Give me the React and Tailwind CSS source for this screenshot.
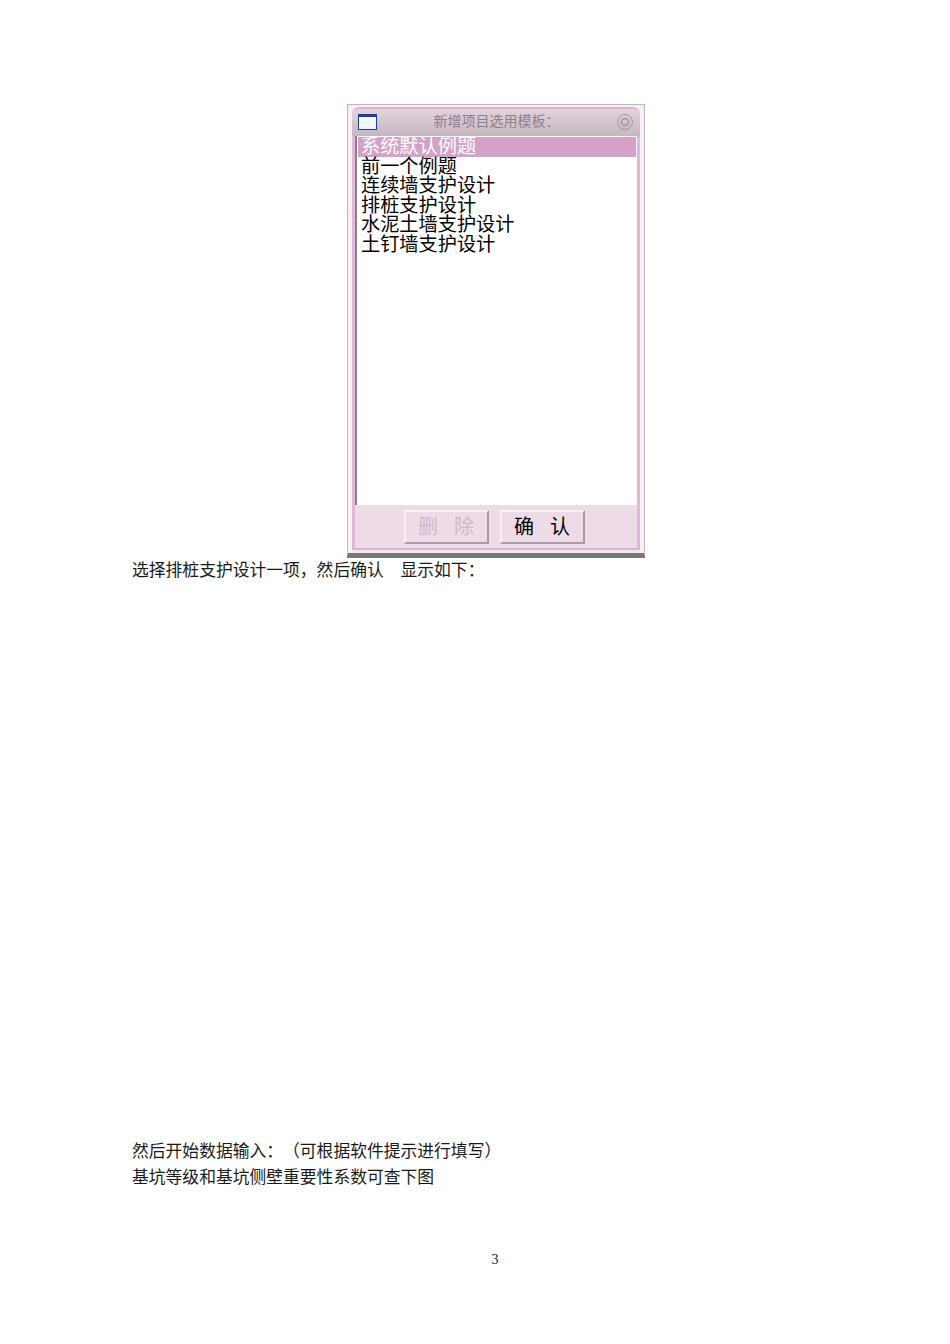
import React from "react";

const templates = [
  "系统默认例题",
  "前一个例题",
  "连续墙支护设计",
  "排桩支护设计",
  "水泥土墙支护设计",
  "土钉墙支护设计",
];

const Button = ({ label, disabled }) => (
  <div
    className={`flex h-[34px] w-[85px] items-center justify-center gap-[16px] border-2 border-t-[#f8f0f6] border-l-[#f8f0f6] border-r-[#a99aa6] border-b-[#a99aa6] text-[20px] leading-none ${
      disabled ? "text-[#cdbac8]" : "text-black"
    }`}
  >
    <span>{label[0]}</span>
    <span>{label[1]}</span>
  </div>
);

const Window = () => (
  <div className="ml-[347px] flex h-[454px] w-[298px] flex-col border border-b-[5px] border-[#b9b9b9] border-b-[#777777] bg-[#f7eff5] px-[4px] pt-[2px]">
    {/* title bar */}
    <div className="flex h-[29px] shrink-0 items-center rounded-t-[7px] border-t-2 border-[#dcb4d2] bg-gradient-to-b from-[#e3d3dd] to-[#c6b6c0] pb-[2px] pl-[6px] pr-[6px]">
      <svg width="19" height="16" viewBox="0 0 19 16">
        <rect x="0.5" y="0.5" width="18" height="15" fill="#f2f6fd" stroke="#1c3f95" />
        <rect x="0" y="0" width="19" height="3" fill="#1c3f95" />
      </svg>
      <div className="flex-1 text-center text-[14px] leading-none text-[#8d8088]">新增项目选用模板：</div>
      <svg width="18" height="18" viewBox="0 0 18 18" fill="none" stroke="#a3939d">
        <circle cx="9" cy="9" r="7.5" />
        <circle cx="9" cy="9" r="3.5" strokeWidth="1.5" />
      </svg>
    </div>

    {/* list */}
    <div className="flex min-h-0 flex-1 flex-col border-x-[3px] border-[#e1b9d8] bg-[#eddbe8]">
      <div className="flex flex-1 flex-col border-l-2 border-l-[#8a8088] bg-white pl-[1px] pr-[1px] pt-[1px]">
        {templates.map((name, i) => (
          <div
            key={name}
            className={`h-[19.5px] whitespace-nowrap pl-[3px] text-[19.2px] leading-[19.5px] ${
              i === 0 ? "bg-[#d4a2c8] text-white" : "text-black"
            }`}
          >
            {name}
          </div>
        ))}
      </div>

      {/* buttons */}
      <div className="flex h-[43px] shrink-0 items-center justify-center gap-[11px] pr-[4px]">
        <Button label="删除" disabled />
        <Button label="确认" />
      </div>
    </div>
    <div className="h-[5px] shrink-0 border-t-2 border-[#dcb4d2] bg-[#f4e6f0]" />
  </div>
);

export default function App() {
  return (
    <div className="flex h-[1344px] w-[950px] flex-col bg-white pt-[104px] font-['Liberation_Serif','Noto_Sans_CJK_SC',serif] text-black">
      <Window />
      <div className="flex flex-1 flex-col pl-[132px] text-[16.8px] leading-[26px] text-[#1a1a1a] [text-spacing-trim:space-all]">
        <p>选择排桩支护设计一项，然后确认　显示如下：</p>
        <p className="mt-[555px]">然后开始数据输入：（可根据软件提示进行填写）</p>
        <p>基坑等级和基坑侧壁重要性系数可查下图</p>
        <p className="mt-[56px] w-[726px] text-center text-[14px] leading-[26px]">3</p>
      </div>
    </div>
  );
}
